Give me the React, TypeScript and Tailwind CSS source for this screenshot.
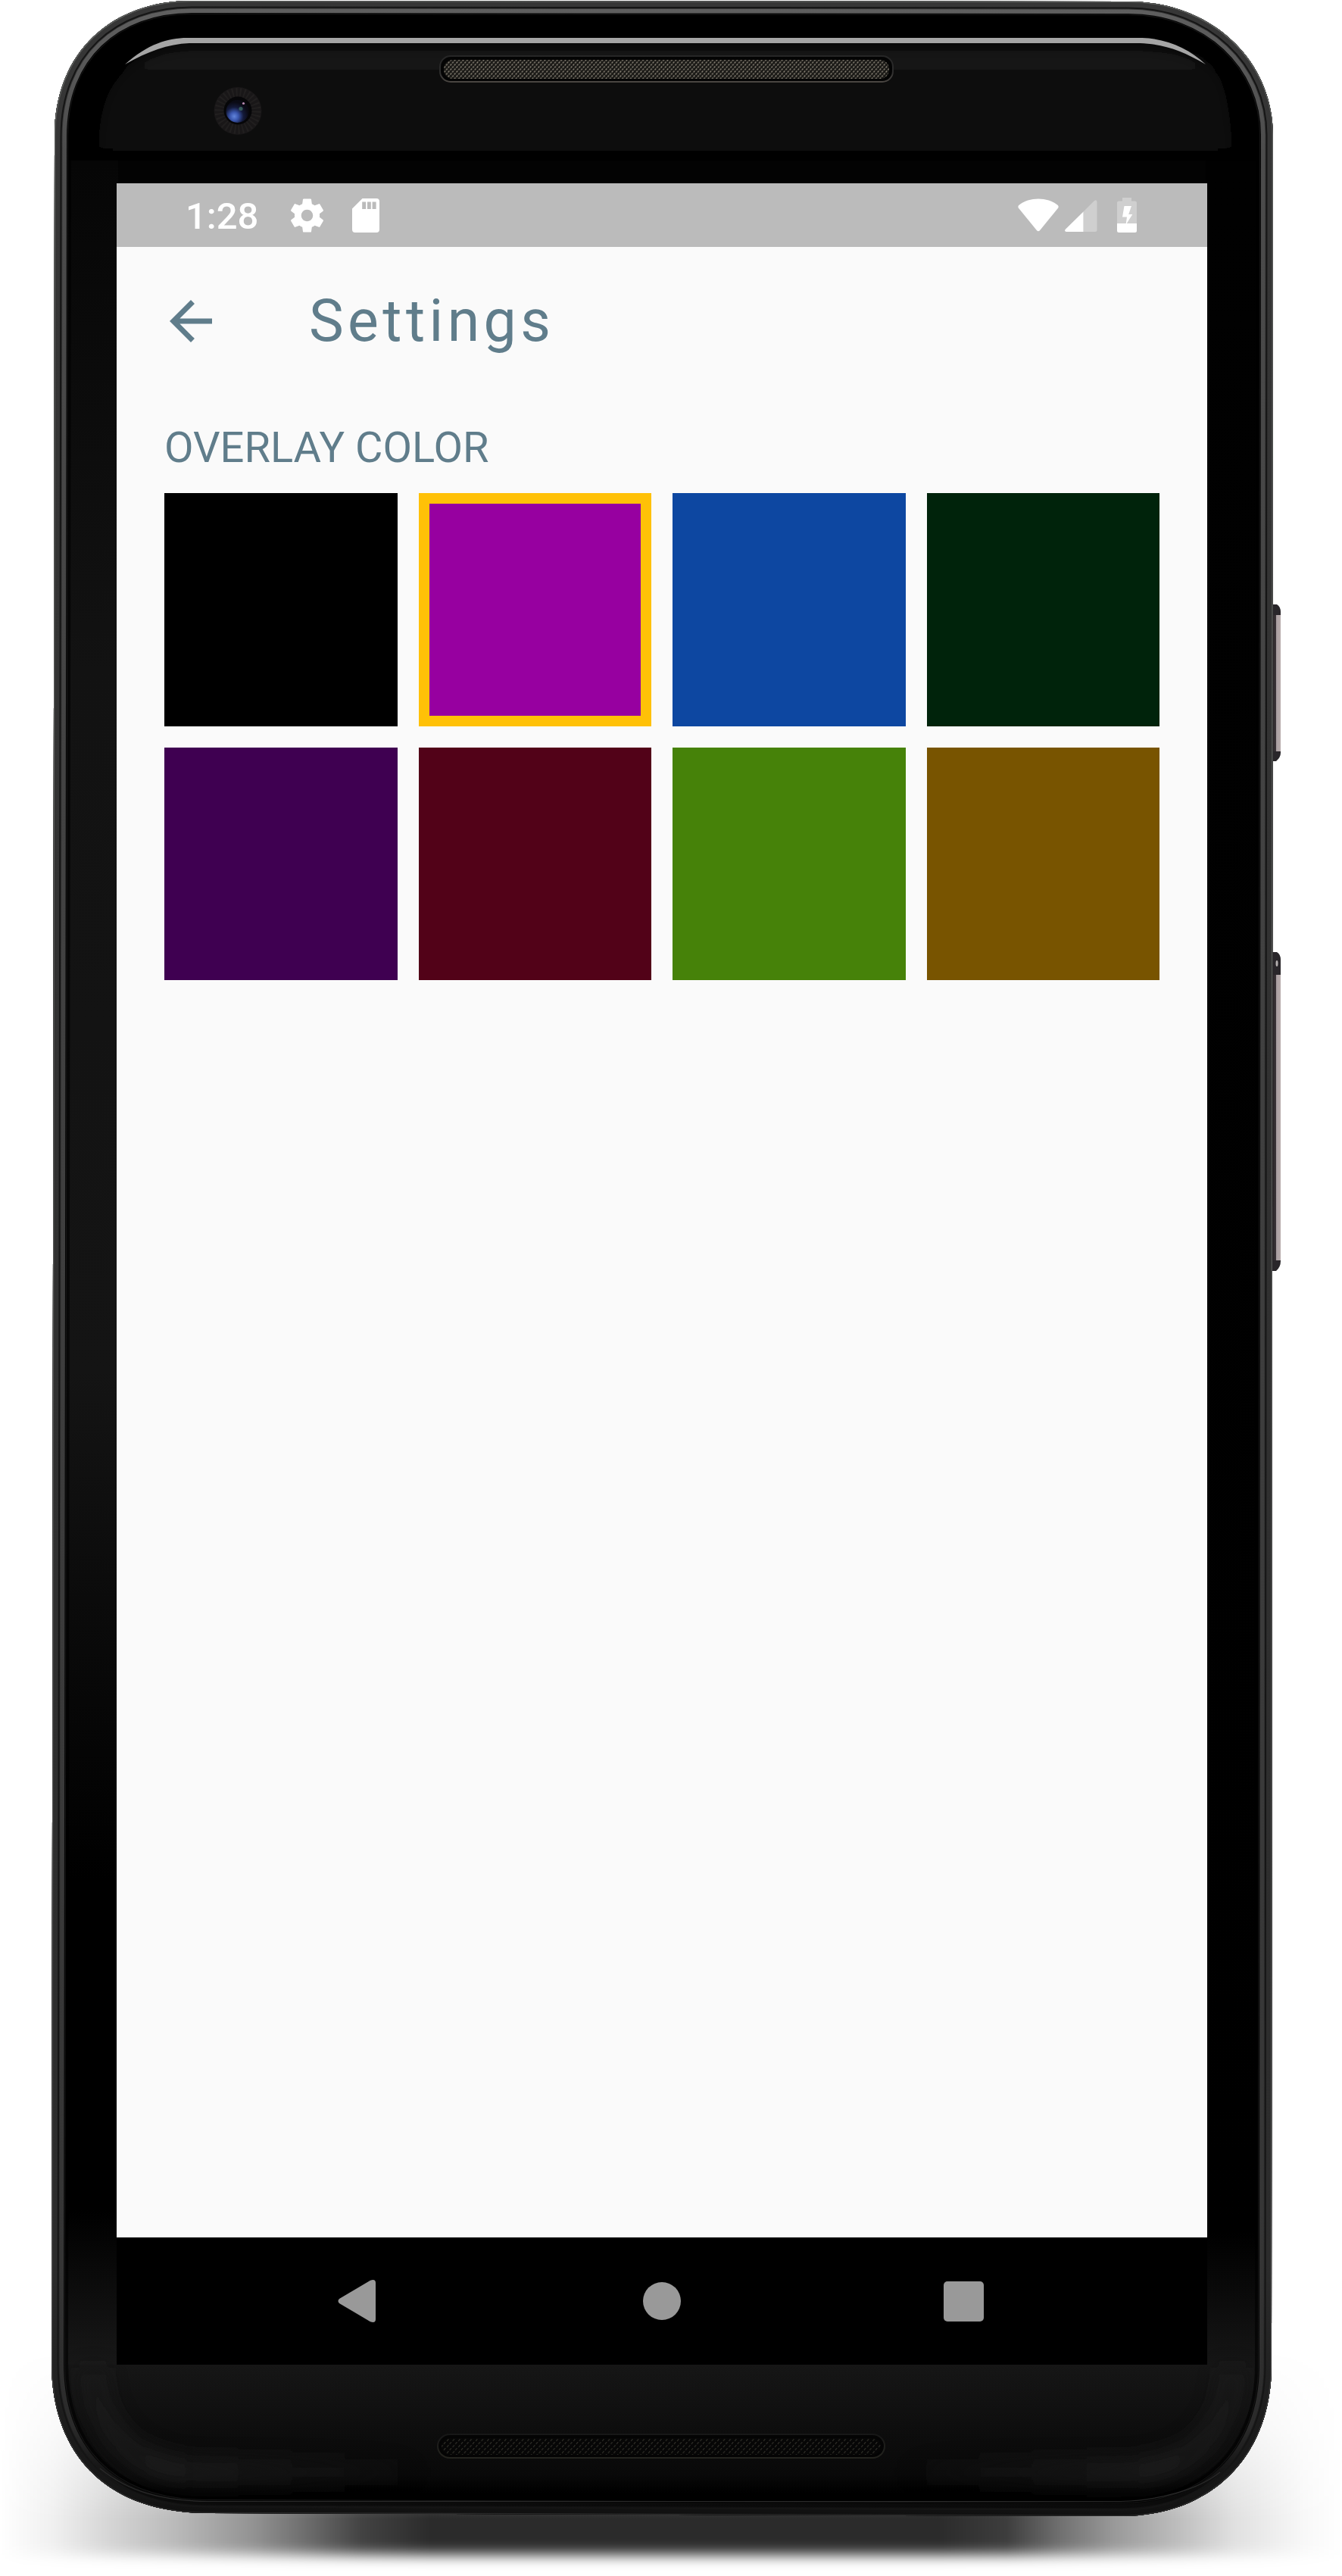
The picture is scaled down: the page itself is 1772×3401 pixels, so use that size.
import React from "react";

const BODY =
  "M72 180C72 68 148 1 253 1L1490 2C1600 2 1681 80 1681 178L1679 3125C1678 3245 1598 3322 1480 3322L275 3318C135 3318 68 3235 68 3120Z";

const SWATCHES = [
  { color: "bg-[#000000]", selected: false },
  { color: "bg-[#9700a0]", selected: true },
  { color: "bg-[#0d47a1]", selected: false },
  { color: "bg-[#00230b]", selected: false },
  { color: "bg-[#3f0051]", selected: false },
  { color: "bg-[#520218]", selected: false },
  { color: "bg-[#468209]", selected: false },
  { color: "bg-[#785400]", selected: false },
];

function Grille({ x, y, w, h, dim }: { x: number; y: number; w: number; h: number; dim?: boolean }) {
  return (
    <g>
      <rect x={x} y={y} width={w} height={h} rx={dim ? 16 : 14} fill="#040404" stroke={dim ? "url(#rimDim)" : "url(#rim)"} strokeWidth="2" />
      <rect x={x + 5} y={y + 5} width={w - 10} height={h - 9} rx="12" fill={dim ? "url(#meshDim)" : "url(#mesh)"} />
    </g>
  );
}

function Device() {
  return (
    <svg className="absolute inset-0" width="1772" height="3401" viewBox="0 0 1772 3401" fill="none" aria-hidden="true">
      <defs>
        <clipPath id="body"><path d={BODY} /></clipPath>
        <linearGradient id="shadowX" x1="0" x2="1772" y1="0" y2="0" gradientUnits="userSpaceOnUse">
          <stop offset="0" stopColor="#000" stopOpacity="0" />
          <stop offset="0.04" stopColor="#000" stopOpacity="0.06" />
          <stop offset="0.08" stopColor="#000" stopOpacity="0.16" />
          <stop offset="0.13" stopColor="#000" stopOpacity="0.27" />
          <stop offset="0.19" stopColor="#000" stopOpacity="0.43" />
          <stop offset="0.235" stopColor="#000" stopOpacity="0.6" />
          <stop offset="0.27" stopColor="#000" stopOpacity="0.74" />
          <stop offset="0.32" stopColor="#000" stopOpacity="0.83" />
          <stop offset="0.7" stopColor="#000" stopOpacity="0.83" />
          <stop offset="0.75" stopColor="#000" stopOpacity="0.76" />
          <stop offset="0.79" stopColor="#000" stopOpacity="0.56" />
          <stop offset="0.83" stopColor="#000" stopOpacity="0.4" />
          <stop offset="0.88" stopColor="#000" stopOpacity="0.25" />
          <stop offset="0.92" stopColor="#000" stopOpacity="0.12" />
          <stop offset="0.97" stopColor="#000" stopOpacity="0.03" />
          <stop offset="1" stopColor="#000" stopOpacity="0" />
        </linearGradient>
        <linearGradient id="shadowY" x1="0" x2="0" y1="3100" y2="3401" gradientUnits="userSpaceOnUse">
          <stop offset="0" stopColor="#000" />
          <stop offset="0.35" stopColor="#555" />
          <stop offset="0.75" stopColor="#fff" />
          <stop offset="1" stopColor="#fff" />
        </linearGradient>
        <mask id="shadowMask" maskUnits="userSpaceOnUse" x="0" y="3100" width="1772" height="301">
          <rect x="0" y="3100" width="1772" height="301" fill="url(#shadowY)" />
        </mask>
        <filter id="soft" filterUnits="userSpaceOnUse" x="0" y="3000" width="1772" height="401">
          <feGaussianBlur stdDeviation="0 9" />
        </filter>
        <filter id="blur8" x="-10%" y="-20%" width="120%" height="140%">
          <feGaussianBlur stdDeviation="8" />
        </filter>
        <filter id="blurGlow" filterUnits="userSpaceOnUse" x="0" y="3000" width="1772" height="401">
          <feGaussianBlur stdDeviation="14" />
        </filter>
        <linearGradient id="glow" x1="88" x2="1661" y1="0" y2="0" gradientUnits="userSpaceOnUse">
          <stop offset="0" stopColor="#262626" stopOpacity="0.5" />
          <stop offset="0.08" stopColor="#262626" />
          <stop offset="0.3" stopColor="#262626" stopOpacity="0" />
          <stop offset="0.7" stopColor="#262626" stopOpacity="0" />
          <stop offset="0.92" stopColor="#262626" />
          <stop offset="1" stopColor="#262626" stopOpacity="0.5" />
        </linearGradient>
        <linearGradient id="rail" x1="0" x2="0" y1="0" y2="3320" gradientUnits="userSpaceOnUse">
          <stop offset="0" stopColor="#606060" />
          <stop offset="0.06" stopColor="#4c4c4c" />
          <stop offset="0.3" stopColor="#434343" />
          <stop offset="0.9" stopColor="#353535" />
          <stop offset="0.965" stopColor="#2a2a2a" />
          <stop offset="0.99" stopColor="#0c0c0c" />
          <stop offset="1" stopColor="#0a0a0a" />
        </linearGradient>
        <linearGradient id="railOuter" x1="0" x2="0" y1="0" y2="3320" gradientUnits="userSpaceOnUse">
          <stop offset="0" stopColor="#363636" />
          <stop offset="0.9" stopColor="#2c2c2c" />
          <stop offset="0.99" stopColor="#161616" />
          <stop offset="1" stopColor="#101010" />
        </linearGradient>
        <linearGradient id="edge" x1="0" x2="0" y1="0" y2="3320" gradientUnits="userSpaceOnUse">
          <stop offset="0" stopColor="#5e605e" />
          <stop offset="0.9" stopColor="#505050" />
          <stop offset="1" stopColor="#282828" />
        </linearGradient>
        <linearGradient id="glass" x1="0" x2="0" y1="57" y2="212" gradientUnits="userSpaceOnUse">
          <stop offset="0" stopColor="#151515" />
          <stop offset="0.5" stopColor="#0d0d0d" />
          <stop offset="1" stopColor="#050505" />
        </linearGradient>
        <linearGradient id="leftStrip" x1="0" x2="0" y1="212" y2="3122" gradientUnits="userSpaceOnUse">
          <stop offset="0" stopColor="#060606" />
          <stop offset="0.23" stopColor="#121212" />
          <stop offset="0.55" stopColor="#141414" />
          <stop offset="0.78" stopColor="#000" />
          <stop offset="0.93" stopColor="#000" />
          <stop offset="1" stopColor="#181818" />
        </linearGradient>
        <linearGradient id="rightStrip" x1="0" x2="0" y1="212" y2="3122" gradientUnits="userSpaceOnUse">
          <stop offset="0" stopColor="#010101" />
          <stop offset="0.94" stopColor="#000" />
          <stop offset="1" stopColor="#161616" />
        </linearGradient>
        <linearGradient id="chin" x1="0" x2="0" y1="3122" y2="3304" gradientUnits="userSpaceOnUse">
          <stop offset="0" stopColor="#161616" />
          <stop offset="0.5" stopColor="#0d0d0d" />
          <stop offset="0.8" stopColor="#090909" />
          <stop offset="0.93" stopColor="#000" />
          <stop offset="1" stopColor="#000" />
        </linearGradient>
        <linearGradient id="rim" x1="0" x2="0" y1="0" y2="1">
          <stop offset="0" stopColor="#262626" />
          <stop offset="0.6" stopColor="#2c2c2c" />
          <stop offset="1" stopColor="#4a4642" />
        </linearGradient>
        <linearGradient id="rimDim" x1="0" x2="0" y1="0" y2="1">
          <stop offset="0" stopColor="#171717" />
          <stop offset="1" stopColor="#24241f" />
        </linearGradient>
        <pattern id="mesh" width="5.400" height="6" patternUnits="userSpaceOnUse">
          <rect width="5.400" height="6" fill="#1b1a17" />
          <path d="M0.500 2.500l1.600-2M3.200 5.500l1.600-2" stroke="#857f73" strokeWidth="1.300" />
        </pattern>
        <pattern id="meshDim" width="7.600" height="8" patternUnits="userSpaceOnUse">
          <rect width="7.600" height="8" fill="#060606" />
          <path d="M1 3l2-3M5 7l2-3" stroke="#2f2e28" strokeWidth="1.300" />
        </pattern>
        <radialGradient id="lens" cx="0.36" cy="0.72" r="0.62">
          <stop offset="0" stopColor="#6285dc" />
          <stop offset="0.3" stopColor="#3a56ad" />
          <stop offset="0.65" stopColor="#141a3a" />
          <stop offset="1" stopColor="#0a0a14" />
        </radialGradient>
        <linearGradient id="key" x1="1680" x2="1691" y1="0" y2="0" gradientUnits="userSpaceOnUse">
          <stop offset="0" stopColor="#282426" />
          <stop offset="0.42" stopColor="#3b3438" />
          <stop offset="0.5" stopColor="#a99ea1" />
          <stop offset="1" stopColor="#b8acac" />
        </linearGradient>
      </defs>

      {/* ground shadow */}
      <g mask="url(#shadowMask)">
        <rect x="0" y="3060" width="1772" height="313" fill="url(#shadowX)" filter="url(#soft)" />
      </g>

      {/* power and volume keys */}
      <path d="M1678 798h8q5 3 5 10v186q0 6-6 11h-7z" fill="#29262a" />
      <path d="M1680 812h11v180h-11z" fill="url(#key)" />
      <path d="M1678 1257h8q5 3 5 10v398q0 8-6 13h-7z" fill="#29262a" />
      <path d="M1680 1287h11v377h-11z" fill="url(#key)" />
      <ellipse cx="1686" cy="1272" rx="1.500" ry="4" fill="#b5b0b0" />

      {/* chassis */}
      <g clipPath="url(#body)">
        <path d={BODY} fill="#000" />
        <path
          d="M130 250V190C132 130 150 98 190 76Q215 64 248 62H1508C1560 64 1590 76 1608 99Q1628 130 1629 250Z"
          fill="url(#glass)"
          filter="url(#blur8)"
        />
        <rect x="86" y="212" width="1580" height="60" fill="#030303" />
        <rect x="86" y="212" width="70" height="2912" fill="url(#leftStrip)" />
        <rect x="1592" y="212" width="72" height="2912" fill="url(#rightStrip)" />
        <rect x="60" y="3122" width="1630" height="190" fill="url(#chin)" />
        <path d="M122 3126C124 3205 170 3264 270 3264H1480C1580 3264 1626 3205 1628 3126" stroke="url(#glow)" strokeWidth="34" opacity="0.7" filter="url(#blurGlow)" />
        <path d={BODY} stroke="#000" strokeWidth="44" opacity="0.6" />
        <path d={BODY} stroke="#161616" strokeWidth="36" />
        <path d={BODY} stroke="#050505" strokeWidth="34" />
        <path d={BODY} stroke="url(#rail)" strokeWidth="32" />
        <path d={BODY} stroke="url(#railOuter)" strokeWidth="21" />
        <path d={BODY} stroke="#151515" strokeWidth="19" />
        <path d={BODY} stroke="url(#railOuter)" strokeWidth="15" />
        <path d={BODY} stroke="url(#edge)" strokeWidth="2.500" />
      </g>
      <path d="M132 3259C170 3290 215 3302 275 3302.500H1480C1530 3301 1580 3288 1611 3264" stroke="#2a2a2a" strokeWidth="1.200" />

      {/* glass highlight */}
      <path d="M165 85C195 58 222 50 247 50H1508C1540 51 1570 64 1592 85C1560 66 1535 58 1505 57H250C222 58 195 68 165 85Z" fill="#a5a5a5" />

      {/* earpiece and speaker */}
      <Grille x={581} y={74} w={598} h={34} />
      <Grille x={578} y={3214} w={590} h={31} dim />

      {/* camera */}
      <circle cx="314" cy="146.500" r="31.500" fill="#191718" />
      <circle cx="314" cy="146.500" r="24" stroke="#211f1f" strokeWidth="13" strokeDasharray="2 3" />
      <circle cx="314" cy="146" r="18.500" fill="#060608" />
      <circle cx="313.500" cy="147" r="15" fill="url(#lens)" />
      <circle cx="318" cy="143.500" r="2.600" fill="#3f6a62" opacity="0.8" />
      <circle cx="321.500" cy="136.500" r="1.600" fill="#b98bb0" />
    </svg>
  );
}

function StatusBar() {
  return (
    <div className="flex h-[84px] shrink-0 items-center bg-[#bbbbbb] text-white">
      <span className="ml-[91px] w-[138px] pt-[3px] text-[49px] leading-[84px] font-medium">1:28</span>
      <svg className="-ml-[4px] h-[53px] w-[53px]" viewBox="0 0 24 24" fill="currentColor">
        <path d="M19.43 12.98c.04-.32.07-.64.07-.98s-.03-.66-.07-.98l2.11-1.65c.19-.15.24-.42.12-.64l-2-3.46c-.12-.22-.39-.3-.61-.22l-2.49 1c-.52-.4-1.08-.73-1.69-.98l-.38-2.65C14.46 2.18 14.25 2 14 2h-4c-.25 0-.46.18-.49.42l-.38 2.65c-.61.25-1.17.59-1.69.98l-2.49-1c-.23-.09-.49 0-.61.22l-2 3.46c-.13.22-.07.49.12.64l2.11 1.65c-.04.32-.07.65-.07.98s.03.66.07.98l-2.11 1.65c-.19.15-.24.42-.12.64l2 3.46c.12.22.39.3.61.22l2.49-1c.52.4 1.08.73 1.69.98l.38 2.65c.03.24.24.42.49.42h4c.25 0 .46-.18.49-.42l.38-2.65c.61-.25 1.17-.59 1.69-.98l2.49 1c.23.09.49 0 .61-.22l2-3.46c.12-.22.07-.49-.12-.64l-2.11-1.65zM12 15.5c-1.93 0-3.5-1.57-3.5-3.5s1.57-3.5 3.5-3.5 3.5 1.57 3.5 3.5-1.57 3.5-3.5 3.5z" />
      </svg>
      <svg className="ml-[33px] h-[45px] w-[36px]" viewBox="0 0 36 45" fill="currentColor">
        <path fillRule="evenodd" d="M13.5 0H32a4 4 0 0 1 4 4V41a4 4 0 0 1-4 4H4a4 4 0 0 1-4-4V13.5ZM13.2 4.5V14h5V4.5ZM20 4.5V14h4.8V4.5ZM26.6 4.5V14h5V4.5Z" />
      </svg>
      <svg className="ml-auto h-[46px] w-[54px]" viewBox="0 0 54 46" fill="currentColor">
        <path d="M1.2 10C15-1.200 39-1.200 52.800 10Q54.200 11.600 53.200 13.500L29 43.300Q27 45.400 25 43.300L.8 13.500Q-.2 11.600 1.200 10Z" />
      </svg>
      <svg className="ml-[8px] h-[42px] w-[43px] translate-y-px" viewBox="0 0 43 42" fill="currentColor">
        <path opacity="0.3" d="M24.500 15.500L39 1Q42.500-1 42.500 3V39.500Q42.500 42 40 42H24.500Z" />
        <path d="M24.500 15.500V42H2Q-1 41.500 .8 38.800Z" />
      </svg>
      <svg className="mr-[93px] ml-[26px] h-[46px] w-[26px]" viewBox="0 0 26 46" fill="currentColor">
        <path opacity="0.3" d="M7 0h12v4.500h4.500Q26 4.500 26 7V34H0V7Q0 4.500 2.500 4.500H7Z" />
        <path d="M0 34H26V43.500Q26 46 23.500 46H2.500Q0 46 0 43.500Z" />
        <path d="M9.500 11H19L15.200 22H20.300L11.500 36L13 25.500H7Z" />
      </svg>
    </div>
  );
}

export default function App() {
  return (
    <div className="relative h-[3401px] w-[1772px] overflow-hidden bg-white font-[Roboto,sans-serif]">
      <Device />
      <main className="relative pt-[242px] pl-[154px]">
        <div className="flex h-[2880px] w-[1440px] flex-col bg-[#fafafa] text-[#607d8b]">
          <StatusBar />
          <header className="flex h-[196px] shrink-0 items-center">
            <svg className="ml-[56px] h-[84px] w-[84px]" viewBox="0 0 24 24" fill="currentColor">
              <path d="M20 11H7.830l5.590-5.590L12 4l-8 8 8 8 1.410-1.410L7.830 13H20v-2z" />
            </svg>
            <h1 className="ml-[114px] text-[77px] leading-[90px] tracking-[5.4px]">Settings</h1>
          </header>
          <section className="grow px-[63px]">
            <h2 className="pt-[36px] text-[56px] leading-[66px]">OVERLAY COLOR</h2>
            <div className="mt-[27px] grid grid-cols-4 gap-[28px]">
              {SWATCHES.map((s) => (
                <button
                  key={s.color}
                  className={`h-[307.5px] ${s.color} ${s.selected ? "border-[14px] border-[#ffc107]" : ""}`}
                />
              ))}
            </div>
          </section>
          <nav className="flex h-[168px] shrink-0 items-center bg-black text-[#999999]">
            <svg className="ml-[292px] h-[56px] w-[50px]" viewBox="0 0 50 56" fill="currentColor">
              <path d="M2 25L43 .8Q50-1.500 50 4V52Q50 57.500 43 55.200L2 31Q-1 28 2 25Z" />
            </svg>
            <div className="ml-[353px] size-[50px] rounded-full bg-[#999999]" />
            <div className="ml-[347px] h-[53px] w-[53px] rounded-[5px] bg-[#999999]" />
          </nav>
        </div>
      </main>
    </div>
  );
}
